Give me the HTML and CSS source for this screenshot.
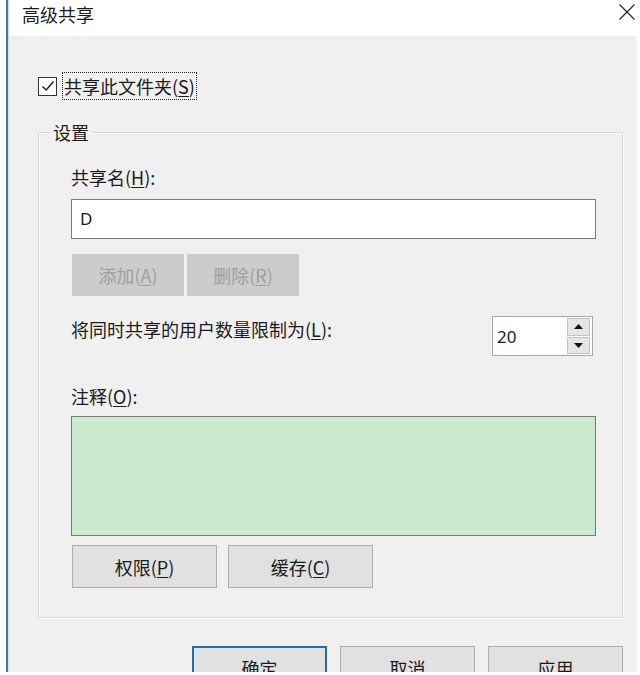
FILE: index.html
```html
<!DOCTYPE html>
<html lang="zh-CN">
<head>
<meta charset="utf-8">
<title>高级共享</title>
<link rel="stylesheet" href="styles.css">
</head>
<body>
<div class="window">
  <div class="titlebar">
    <span class="title">高级共享</span>
    <svg class="close" width="18" height="18" viewBox="0 0 18 18"><path d="M1.5 1.5 L16.5 16.5 M16.5 1.5 L1.5 16.5" stroke="#2b2b2b" stroke-width="1.3" fill="none"/></svg>
  </div>
  <div class="content">
    <div class="check-row">
      <span class="checkbox"><svg width="16" height="16" viewBox="0 0 16 16"><path d="M2.5 8.5 L6.2 12 L13.5 3.5" stroke="#222" stroke-width="1.5" fill="none"/></svg></span>
      <span class="focus-label">共享此文件夹(<u>S</u>)</span>
    </div>
    <fieldset class="group">
      <legend>设置</legend>
      <div class="label">共享名(<u>H</u>):</div>
      <div class="textbox">D</div>
      <div class="btn-row small">
        <button class="btn disabled">添加(<u>A</u>)</button>
        <button class="btn disabled">删除(<u>R</u>)</button>
      </div>
      <div class="limit-row">
        <span class="label limit-label">将同时共享的用户数量限制为(<u>L</u>):</span>
        <div class="spin">
          <span class="spin-value">20</span>
          <div class="spin-btns">
            <span class="spin-btn"><svg width="9" height="5" viewBox="0 0 9 5"><path d="M0 5 L4.5 0 L9 5 Z" fill="#111"/></svg></span>
            <span class="spin-btn"><svg width="9" height="5" viewBox="0 0 9 5"><path d="M0 0 L4.5 5 L9 0 Z" fill="#111"/></svg></span>
          </div>
        </div>
      </div>
      <div class="label comment-label">注释(<u>O</u>):</div>
      <div class="textarea"></div>
      <div class="btn-row perm">
        <button class="btn">权限(<u>P</u>)</button>
        <button class="btn">缓存(<u>C</u>)</button>
      </div>
    </fieldset>
    <div class="dialog-buttons">
      <button class="btn default">确定</button>
      <button class="btn">取消</button>
      <button class="btn">应用</button>
    </div>
  </div>
</div>
</body>
</html>
```

FILE: styles.css
```css
* { box-sizing: border-box; }

html, body {
  margin: 0;
  padding: 0;
  background: #ffffff;
  overflow: hidden;
}

body {
  font-family: "Noto Sans CJK SC", "Noto Sans", sans-serif;
  font-size: 18px;
  color: #1b1b1b;
}

.window {
  margin-left: 6px;
  width: 631px;
  height: 672px;
  border-left: 2px solid #52798a;
  display: flex;
  flex-direction: column;
  overflow: hidden;
}

.titlebar {
  height: 36px;
  flex: none;
  width: 100%;
  background: #ffffff;
  display: flex;
  align-items: flex-start;
  padding: 2px 0 0 14px;
  box-shadow: inset 1px 0 0 #c4e2ec;
}

.title {
  font-size: 18px;
  line-height: 24px;
  color: #1a1a1a;
}

.close {
  display: block;
  flex: none;
  width: 18px;
  height: 18px;
  margin: 1px 1px 0 auto;
}

.content {
  flex: 1;
  background: #f0f0f0;
  box-shadow: inset 1px 0 0 #c4e2ec;
  padding: 36px 0 0 30px;
  overflow: hidden;
}

.check-row {
  height: 28px;
  display: flex;
  align-items: center;
}

.checkbox {
  width: 19px;
  height: 19px;
  border: 1.5px solid #333333;
  background: #ffffff;
  display: flex;
  align-items: center;
  justify-content: center;
  margin-right: 5px;
}

.focus-label {
  height: 28px;
  line-height: 26px;
  padding: 0 1px;
  border: 1px dotted #222;
}

.group {
  margin: 22px 0 0 0;
  width: 585px;
  border: 1px solid #d6d6d6;
  box-shadow: inset 1px 1px 0 #ffffff, 1px 1px 0 #ffffff;
  padding: 23px 26px 29px 32px;
  min-width: 0;
}

.group legend {
  margin-left: -21px;
  padding: 0 3px;
  line-height: 20px;
}

.label {
  line-height: 24px;
}

u { text-decoration-thickness: 1px; text-underline-offset: 2px; }

.textbox {
  margin-top: 10px;
  height: 40px;
  background: #ffffff;
  border: 1px solid #7a7a7a;
  padding: 0 8px;
  line-height: 38px;
  font-family: "Noto Sans", sans-serif;
  font-size: 17px;
}

.btn-row {
  display: flex;
  margin-left: 1px;
}

.btn {
  font: inherit;
  color: #1b1b1b;
  background: #e1e1e1;
  border: 1px solid #adadad;
  padding: 0;
  margin: 0;
  display: flex;
  align-items: center;
  justify-content: center;
}

.btn-row.small {
  margin-top: 15px;
  gap: 3px;
}

.btn-row.small .btn {
  width: 112px;
  height: 42px;
}

.btn.disabled {
  background: #cccccc;
  border-color: #cccccc;
  color: #9e9e9e;
}

.limit-row {
  margin-top: 20px;
  height: 40px;
  display: flex;
  align-items: flex-start;
  justify-content: space-between;
}

.limit-label {
  padding-top: 1px;
}

.spin {
  width: 101px;
  height: 40px;
  margin-right: 3px;
  background: #ffffff;
  border: 1px solid #a8a8a8;
  display: flex;
  align-items: center;
  justify-content: space-between;
  padding: 1px 2px 1px 4px;
}

.spin-value {
  font-family: "Noto Sans", sans-serif;
  font-size: 17px;
}

.spin-btns {
  display: flex;
  flex-direction: column;
  gap: 1px;
  height: 100%;
}

.spin-btn {
  width: 23px;
  flex: 1;
  background: #e6e6e6;
  border: 1px solid #c4c4c4;
  display: flex;
  align-items: center;
  justify-content: center;
}

.spin-btn svg { display: block; }

.comment-label {
  margin-top: 28px;
}

.textarea {
  margin-top: 8px;
  height: 120px;
  background: #cce8cf;
  border: 1px solid #7a7a7a;
}

.btn-row.perm {
  margin-top: 9px;
  gap: 11px;
}

.btn-row.perm .btn {
  width: 145px;
  height: 43px;
}

.dialog-buttons {
  margin-top: 28px;
  width: 585px;
  display: flex;
  justify-content: flex-end;
  gap: 13px;
}

.dialog-buttons .btn {
  width: 135px;
  height: 43px;
}

.btn.default {
  border: 2px solid #1f6fb0;
}
```
